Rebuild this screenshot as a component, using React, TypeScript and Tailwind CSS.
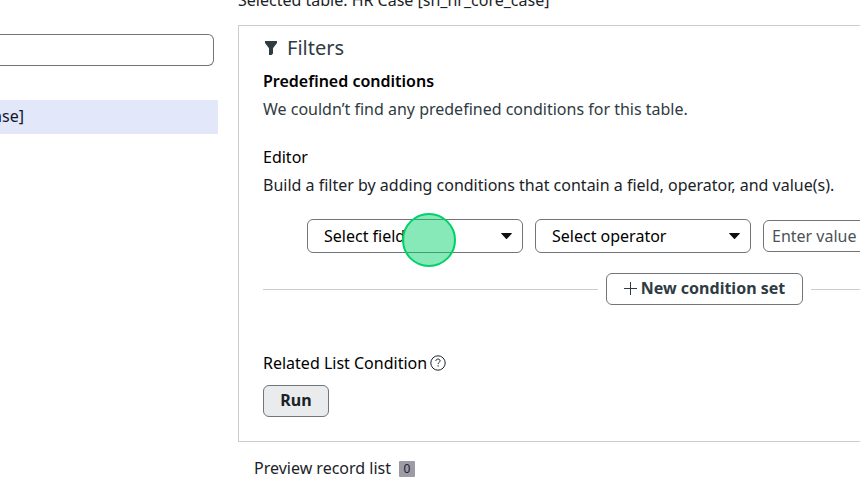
import React from "react";

type PickerProps = { id: string; label: string; children?: React.ReactNode };

function Picker({ id, label, children }: PickerProps) {
  return (
    <div className="relative w-[216px] shrink-0">
      <select
        id={id}
        aria-label={label}
        className="block h-[34px] w-full appearance-none rounded-md border border-[#70757a] bg-white pr-8 pl-4 text-base text-black"
      >
        <option>{label}</option>
      </select>
      <svg
        className="pointer-events-none absolute top-3.5 right-[11px] h-1.5 w-[11px]"
        viewBox="0 0 11 6"
        fill="#0b0f12"
        aria-hidden="true"
      >
        <path d="M0.3 0h10.4L10.9 0.6 6 5.7Q5.5 6.1 5 5.7L0.1 0.6Z" />
      </svg>
      {children}
    </div>
  );
}

function FunnelIcon() {
  return (
    <svg className="h-3.5 w-3.5" viewBox="0 0 14 14" fill="#2f3b43" aria-hidden="true">
      <path d="M1 0h12v2L9 7.2V12.6L7.6 14H5V7.2L1 2Z" />
    </svg>
  );
}

function HelpIcon() {
  return (
    <svg className="h-4 w-4" viewBox="0 0 16 16" fill="none" stroke="#1b2328" aria-hidden="true">
      <circle cx="8" cy="8" r="7.2" strokeWidth="1" />
      <path d="M5.9 6C5.9 4.7 6.8 4 8 4s2.1.8 2.1 1.9c0 1.4-2 1.6-2 3.1" strokeWidth="1" />
      <path d="M8.1 10.3v1.2" strokeWidth="1.1" />
    </svg>
  );
}

export default function App() {
  return (
    <div className="flex min-h-screen gap-5 overflow-hidden bg-white font-['Noto_Sans',sans-serif] text-base text-[#1b2328]">
      <aside className="w-[218px] shrink-0 pt-[34px]">
        <div className="pr-1">
          <input
            type="text"
            aria-label="Search tables"
            className="block h-8 w-full rounded-r-md border border-l-0 border-[#70757a] bg-white px-2"
          />
        </div>
        <div className="mt-[34px] flex h-[34px] items-center bg-[#e3e7fa] pb-0.5">
          <div className="flex w-6 justify-end overflow-hidden leading-6 text-[#10172a]">
            <span>ase]</span>
          </div>
        </div>
      </aside>

      <main className="-mt-3 min-w-[932px] flex-1">
        <p className="leading-6">Selected table: HR Case [sn_hr_core_case]</p>

        <section className="mt-[13px] border border-[#cbcdce] px-6 pt-2 pb-6">
          <h2 className="flex items-center gap-[9px] pl-px text-xl leading-7 text-[#2f3b43]">
            <FunnelIcon />
            Filters
          </h2>

          <h3 className="mt-[7px] leading-6 font-semibold text-black">Predefined conditions</h3>
          <p className="mt-1 leading-6 text-[#2f3b43]">
            We couldn’t find any predefined conditions for this table.
          </p>

          <h3 className="mt-6 leading-6 text-black">Editor</h3>
          <p className="mt-1 leading-6">
            Build a filter by adding conditions that contain a field, operator, and value(s).
          </p>

          <div className="mt-[22px] flex items-center gap-3 pl-11">
            <Picker id="field" label="Select field">
              <span className="pointer-events-none absolute -top-1.5 left-[95px] h-[54px] w-[54px] rounded-full border-2 border-[#00d068] bg-[#00d068]/47" />
            </Picker>
            <Picker id="operator" label="Select operator" />
            <input
              type="text"
              aria-label="Value"
              placeholder="Enter value"
              className="h-8 min-w-0 flex-1 rounded-md border border-[#70757a] bg-white px-2 text-base placeholder:text-[#4a5359]"
            />
          </div>

          <div className="mt-5 flex items-center gap-2">
            <span className="h-px flex-1 bg-[#cbcdce]" />
            <button
              type="button"
              className="flex h-8 w-[197px] items-center justify-center gap-1 rounded-md border border-[#70757a] bg-white pb-0.5 font-bold text-[#2f3b43]"
            >
              <svg className="h-3.5 w-3.5" viewBox="0 0 14 14" stroke="#2f3b43" aria-hidden="true">
                <path d="M7.5 1v13M1 7.5h13" />
              </svg>
              New condition set
            </button>
            <span className="h-px flex-1 bg-[#cbcdce]" />
          </div>

          <h3 className="mt-[46px] flex items-center gap-[3px] leading-6 text-black">
            Related List Condition
            <HelpIcon />
          </h3>
          <button
            type="button"
            className="mt-2.5 block h-8 w-[66px] rounded-md border border-[#70757a] bg-[#e9ebed] pb-0.5 font-bold text-[#1b2328]"
          >
            Run
          </button>
        </section>

        <div className="mt-3.5 flex items-center gap-2 pl-4 leading-6">
          Preview record list
          <span className="mt-0.5 flex h-4 w-4 items-center justify-center rounded-[1px] bg-[#9c9ba6] text-xs text-[#1b2328]">
            0
          </span>
        </div>
      </main>
    </div>
  );
}
